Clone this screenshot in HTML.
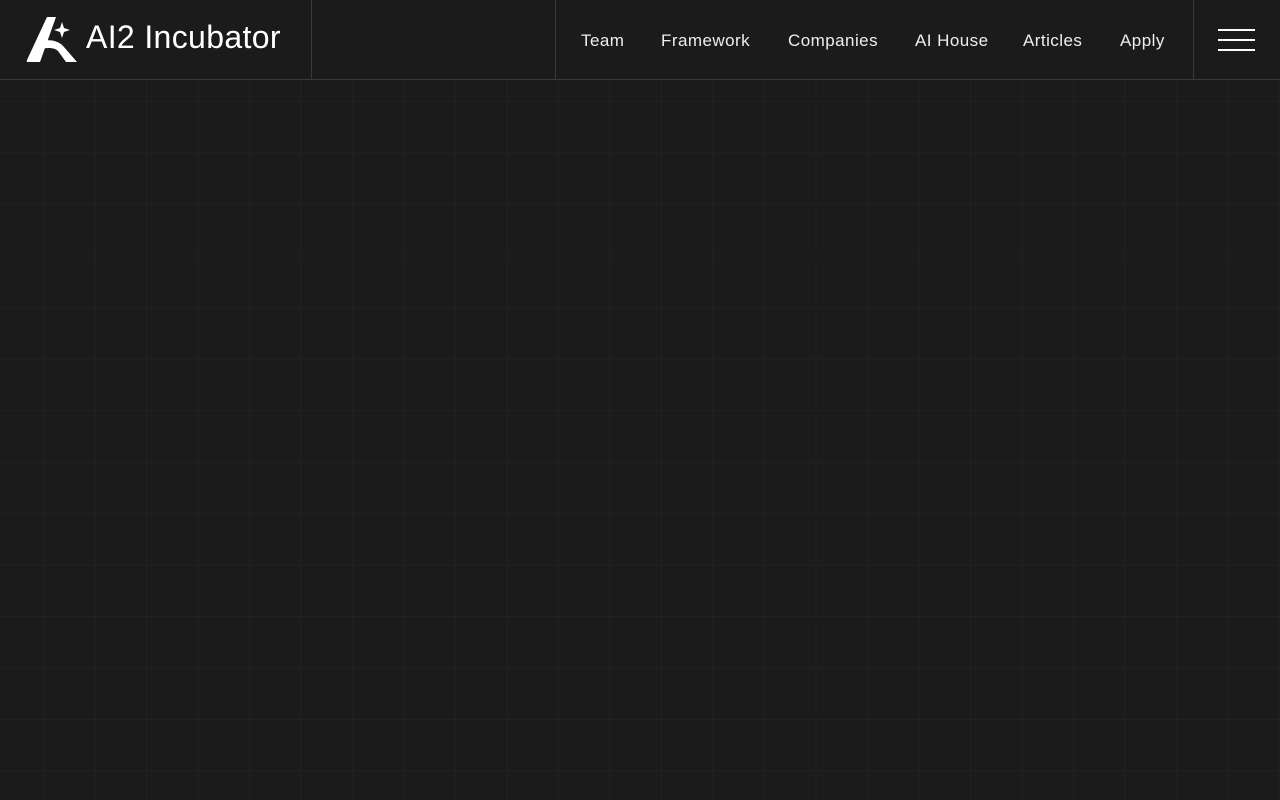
<!DOCTYPE html>
<html><head><meta charset="utf-8"><style>
html,body{margin:0;padding:0;width:1280px;height:800px;overflow:hidden;background:#1b1b1b;font-family:"Liberation Sans",sans-serif;}
.grid{position:absolute;left:0;top:80px;width:1280px;height:720px;
background-image:linear-gradient(to right,rgba(255,255,255,0.022) 1px,transparent 1px),linear-gradient(to bottom,rgba(255,255,255,0.022) 1px,transparent 1px);
background-size:51.5px 51.5px;background-position:43px 21px;}
header{position:absolute;left:0;top:0;width:1280px;height:79px;border-bottom:1px solid #3a3a3a;background:#1b1b1b;}
.v{position:absolute;top:0;height:79px;width:1px;background:#3a3a3a;}
.logo{position:absolute;left:26px;top:16px;}
.logo span{position:absolute;left:60px;top:3px;color:#fff;font-size:32px;letter-spacing:0.35px;white-space:nowrap;}
nav a{position:absolute;top:31px;color:#eee;font-size:17px;letter-spacing:0.45px;text-decoration:none;white-space:nowrap;}
.hb{position:absolute;left:1218px;width:37px;height:2px;background:#fff;}
</style></head><body>
<div class="grid"></div>
<header>
<div class="logo">
<svg width="52" height="47" viewBox="0 0 52 47"><path d="M21 1 H30 L14 46 H2 Q0 46 1 44 Z" fill="#fff"/><path d="M16 25 C25 23 33 25 38 31 L51 46 H40 L32 35 C29 32 24 31 13 33 Z" fill="#fff"/><path d="M36 6 L38 12 L44 14 L38 16 L36 22 L34 16 L28 14 L34 12 Z" fill="#fff"/></svg>
<span>AI2 Incubator</span>
</div>
<div class="v" style="left:311px"></div>
<div class="v" style="left:555px"></div>
<div class="v" style="left:1193px"></div>
<nav>
<a style="left:581px">Team</a>
<a style="left:661px">Framework</a>
<a style="left:788px">Companies</a>
<a style="left:915px">AI House</a>
<a style="left:1023px">Articles</a>
<a style="left:1120px">Apply</a>
</nav>
<div class="hb" style="top:29px"></div>
<div class="hb" style="top:39px"></div>
<div class="hb" style="top:49px"></div>
</header>
</body></html>
